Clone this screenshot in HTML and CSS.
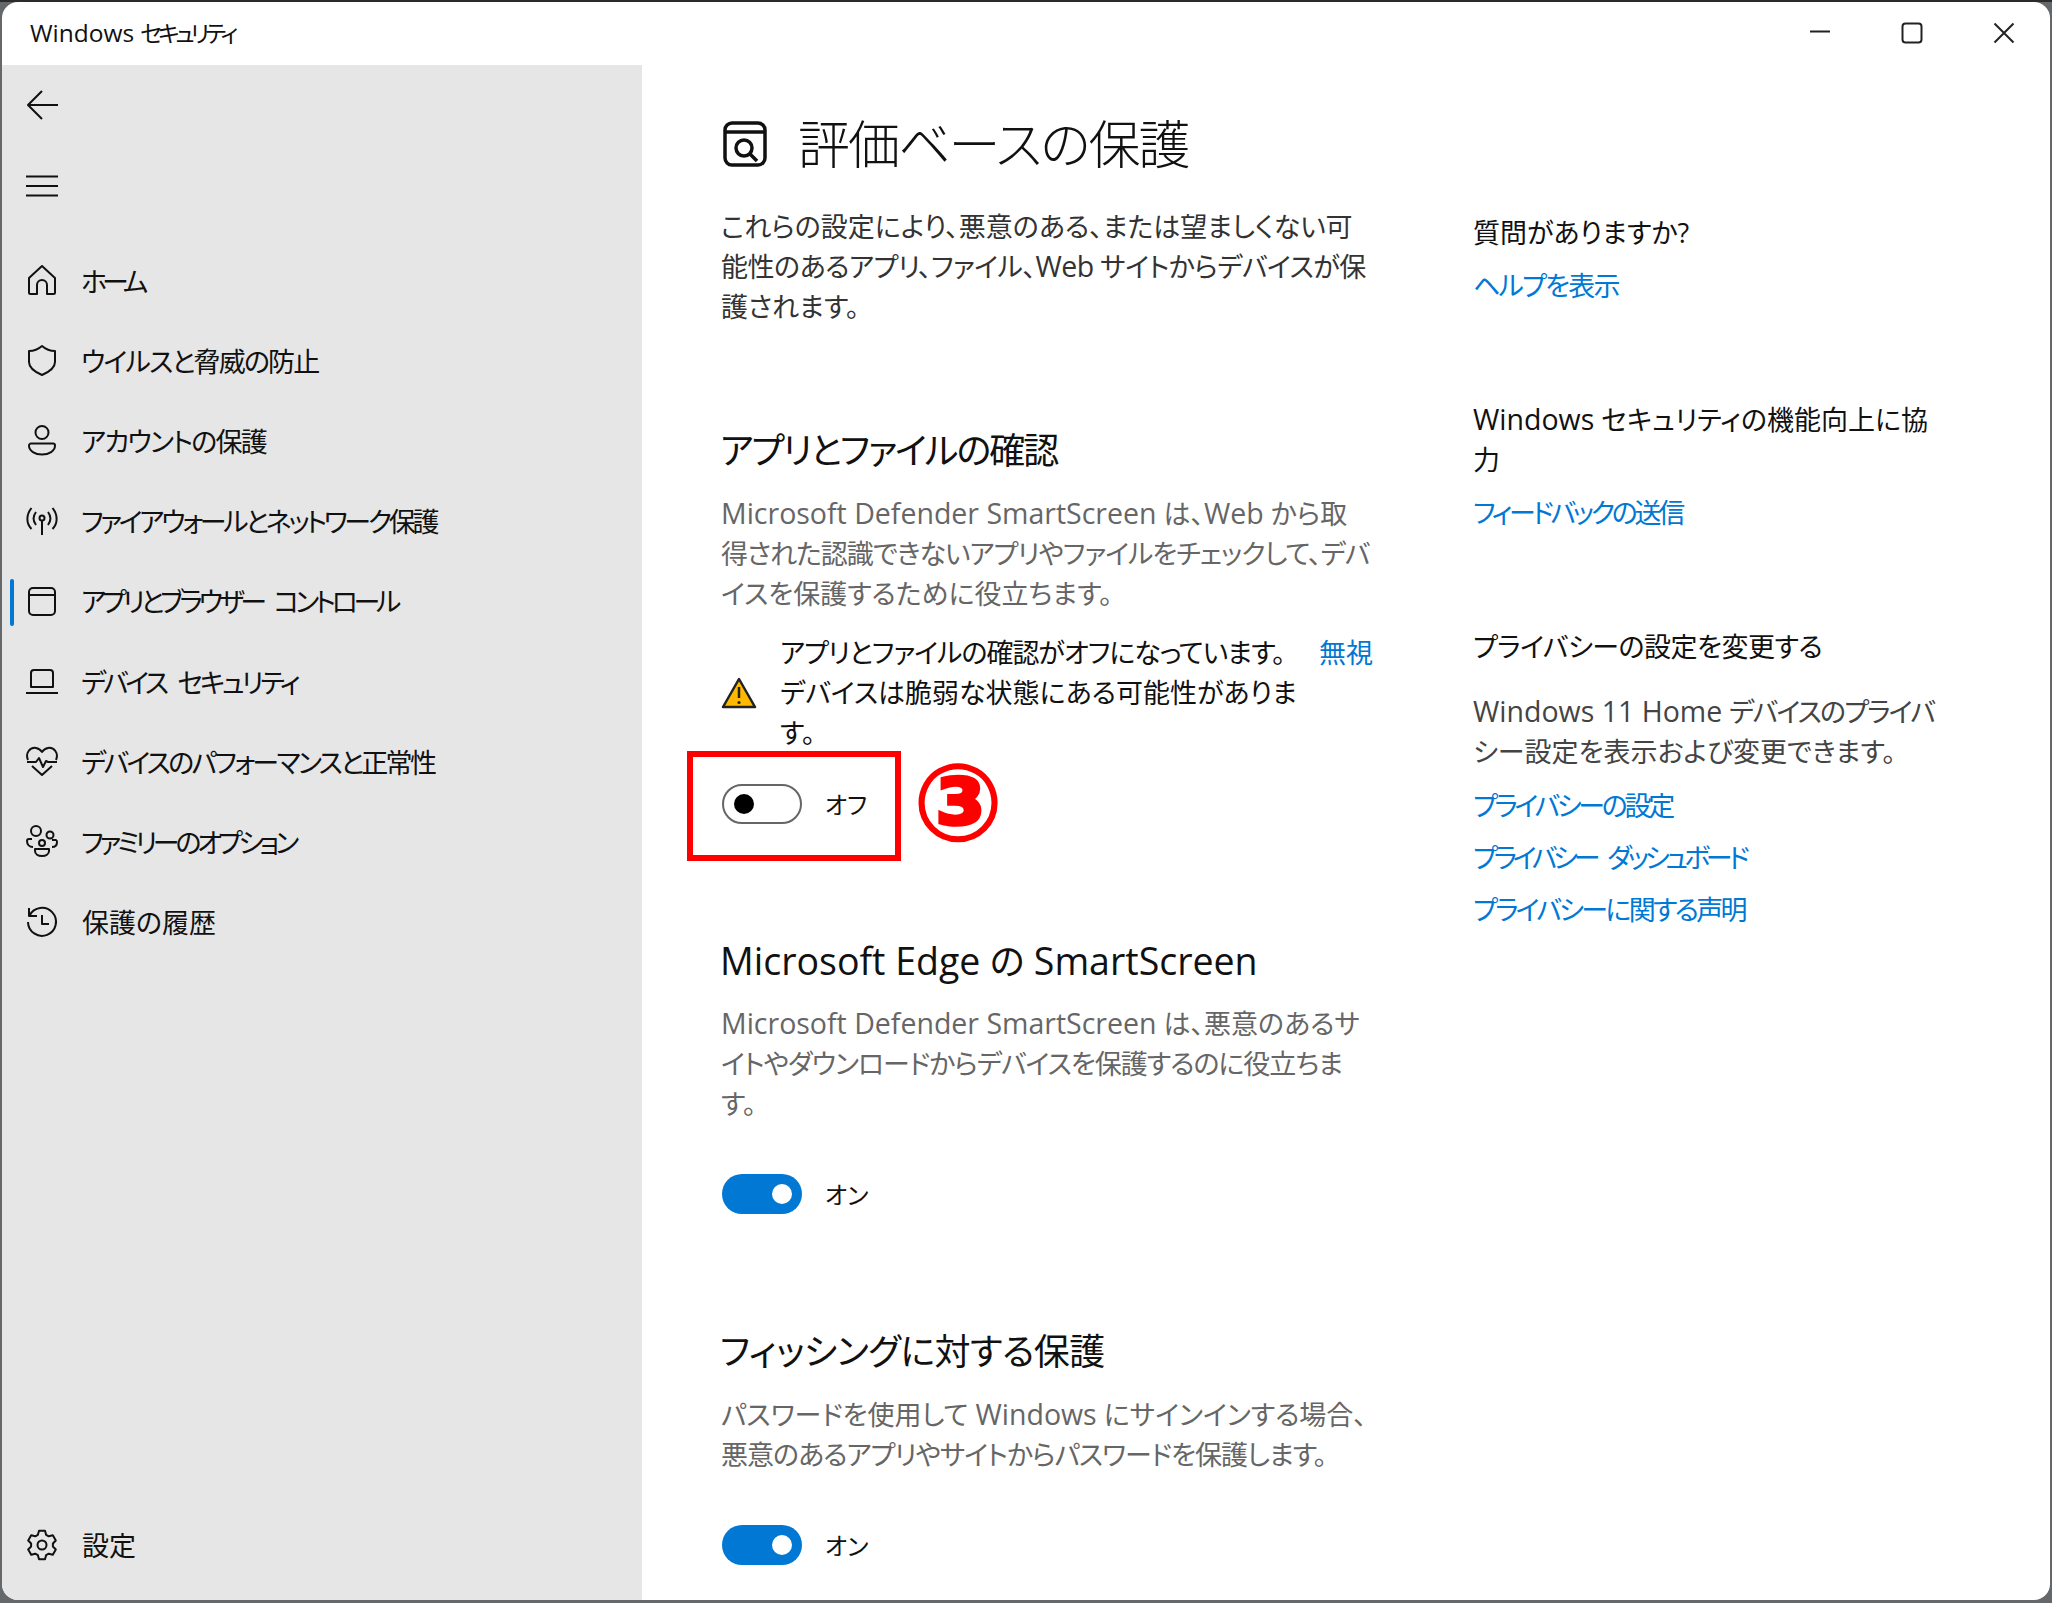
FILE: index.html
```html
<!DOCTYPE html>
<html lang="ja">
<head>
<meta charset="utf-8">
<title>Windows セキュリティ</title>
<link rel="stylesheet" href="styles.css">
</head>
<body>
<div class="window">
  <header class="titlebar">
    <span class="app-name"><span class="lat-t">Windows</span> <span class="ls4">セキュリティ</span></span>
    <div class="caption">
      <svg class="cap" viewBox="0 0 22 22"><path d="M1 9.500H21"/></svg>
      <svg class="cap" viewBox="0 0 22 22"><rect x="1.500" y="1.500" width="19" height="19" rx="3"/></svg>
      <svg class="cap" viewBox="0 0 22 22"><path d="M1.500 1.500L20.500 20.500M20.500 1.500L1.500 20.500"/></svg>
    </div>
  </header>
  <div class="content">
    <aside class="sidebar">
      <div class="tool"><svg class="ico" viewBox="0 0 32 32"><path d="M16 2L2 16L16 30M2 16H32"/></svg></div>
      <div class="tool"><svg class="ico" viewBox="0 0 32 32"><path d="M0 6.500H32M0 16H32M0 25.500H32"/></svg></div>
      <nav class="nav">
        <div class="item"><svg class="ico" viewBox="0 0 32 32"><path d="M3 14L16 2L29 14V28.500a1.500 1.500 0 0 1-1.500 1.500H21V21a5 5 0 0 0-10 0V30H4.500A1.500 1.500 0 0 1 3 28.500Z"/></svg><span class="ls5">ホーム</span></div>
        <div class="item"><svg class="ico" viewBox="0 0 32 32"><path d="M16 2C20 5.500 24 7 29 7V18C29 24 23 28 16 31C9 28 3 24 3 18V7C8 7 12 5.500 16 2Z"/></svg><span class="ls2">ウイルスと脅威の防止</span></div>
        <div class="item"><svg class="ico" viewBox="0 0 32 32"><circle cx="16" cy="8.500" r="6.500"/><path d="M5 19.500H27a2 2 0 0 1 2 2C29 27 23 30.500 16 30.500S3 27 3 21.500a2 2 0 0 1 2-2Z"/></svg><span class="ls2">アカウントの保護</span></div>
        <div class="item"><svg class="ico" viewBox="0 0 32 32"><circle cx="16" cy="13" r="2.500"/><path d="M16 15.500V30M10 7C7 11 7 16 10 20M22 7C25 11 25 16 22 20M5.500 3C0 10 0 18 5.500 24M26.500 3C32 10 32 18 26.500 24"/></svg><span class="ls3">ファイアウォールとネットワーク保護</span></div>
        <div class="item active"><svg class="ico" viewBox="0 0 32 32"><rect x="3" y="3" width="26" height="27" rx="4"/><path d="M3 10H29"/></svg><span class="ls4">アプリとブラウザー コントロール</span></div>
        <div class="item"><svg class="ico" viewBox="0 0 32 32"><path d="M5 22V8a3 3 0 0 1 3-3H24a3 3 0 0 1 3 3V22ZM0 28H32"/></svg><span class="ls3">デバイス セキュリティ</span></div>
        <div class="item"><svg class="ico" viewBox="0 0 32 32"><path d="M2 15C-1 8 4 2 10 3C13 3.500 15 5.500 16 7C17 5.500 19 3.500 22 3C28 2 33 8 30 15M1 17H10L13 13L17 22L20 16L22 17H31M6 21L16 30L26 21"/></svg><span class="ls25">デバイスのパフォーマンスと正常性</span></div>
        <div class="item"><svg class="ico" viewBox="0 0 32 32"><circle cx="10" cy="6" r="5"/><circle cx="24" cy="10" r="3.500"/><circle cx="16" cy="18" r="3"/><path d="M6 14H3a2 2 0 0 0-2 2C1 19 3 22 7 22M26 15H30a2 2 0 0 1 1 2C31 20 29 22 26 22M9 24H23V26C23 29 20 31 16 31S9 29 9 26Z"/></svg><span class="ls4">ファミリーのオプション</span></div>
        <div class="item"><svg class="ico" viewBox="0 0 32 32"><path d="M3 2V10H11M3.500 9.500A14 14 0 1 1 2 16M16 9V18H23"/></svg><span class="k">保護の履歴</span></div>
      </nav>
      <div class="item settings"><svg class="ico" viewBox="0 0 32 32"><path d="M13 1.800L19 1.800L20.100 5.800L22.800 7.300L26.800 6.300L29.800 11.500L26.900 14.500L26.900 17.500L29.800 20.500L26.800 25.700L22.800 24.700L20.100 26.200L19 30.200L13 30.200L11.900 26.200L9.200 24.700L5.200 25.700L2.200 20.500L5.100 17.500L5.100 14.500L2.200 11.500L5.200 6.300L9.200 7.300L11.900 5.800Z"/><circle cx="16" cy="16" r="4.500"/></svg><span class="k">設定</span></div>
    </aside>
    <main class="main">
      <div class="left">
        <div class="page-head">
          <svg class="page-ico" viewBox="0 0 44 46"><rect x="2" y="2" width="40" height="42" rx="7"/><path d="M2 11H42"/><circle cx="21" cy="27" r="8"/><path d="M27 33L34 40"/></svg>
          <h1>評価ベースの保護</h1>
        </div>
        <p class="intro">これらの設定により、悪意のある、または望ましくない可<br><span class="ls05">能性のあるアプリ、ファイル、<span class="lat">Web</span> サイトからデバイスが保</span><br>護されます。</p>

        <h2 class="h-first tight">アプリとファイルの確認</h2>
        <p class="desc"><span class="lat">Microsoft Defender SmartScreen</span> は、<span class="lat">Web</span> から取<br><span class="ls1">得された認識できないアプリやファイルをチェックして、デバ</span><br>イスを保護するために役立ちます。</p>
        <div class="warning">
          <svg class="warn-ico" viewBox="0 0 36 32"><path d="M18 2L34 30H2Z" fill="#ffb900" stroke="#222" stroke-width="2.500" stroke-linejoin="round"/><path d="M18 10V21" stroke="#222" stroke-width="2.500"/><circle cx="18" cy="25.500" r="1.600" fill="#222"/></svg>
          <p class="warn-text"><span class="ls1">アプリとファイルの確認がオフになっています。</span><br>デバイスは脆弱な状態にある可能性がありま<br>す。</p>
          <a class="link warn-link">無視</a>
        </div>
        <div class="toggle-row tr-first">
          <span class="toggle off"><i class="knob"></i></span><span class="tlabel">オフ</span>
          <div class="red-box"></div>
          <div class="callout">③</div>
        </div>

        <h2 class="h-next"><span class="lat-h">Microsoft Edge</span> の <span class="lat-h">SmartScreen</span></h2>
        <p class="desc desc-tight"><span class="lat">Microsoft Defender SmartScreen</span> は、悪意のあるサ<br><span class="ls1">イトやダウンロードからデバイスを保護するのに役立ちま</span><br>す。</p>
        <div class="toggle-row">
          <span class="toggle on"><i class="knob"></i></span><span class="tlabel">オン</span>
        </div>

        <h2 class="h-next ls05">フィッシングに対する保護</h2>
        <p class="desc">パスワードを使用して <span class="lat">Windows</span> にサインインする場合、<br><span class="ls1">悪意のあるアプリやサイトからパスワードを保護します。</span></p>
        <div class="toggle-row">
          <span class="toggle on"><i class="knob"></i></span><span class="tlabel">オン</span>
        </div>
      </div>
      <div class="right">
        <section class="block">
          <h3>質問がありますか?</h3>
          <a class="link ls2">ヘルプを表示</a>
        </section>
        <section class="block">
          <h3><span class="lat">Windows</span> セキュリティの機能向上に協<br>力</h3>
          <a class="link ls3">フィードバックの送信</a>
        </section>
        <section class="block">
          <h3 class="ls05">プライバシーの設定を変更する</h3>
          <p class="privacy"><span class="lat">Windows 11 Home</span> <span class="ls2">デバイスのプライバ</span><br>シー設定を表示および変更できます。</p>
          <a class="link ls3">プライバシーの設定</a>
          <a class="link ls4">プライバシー ダッシュボード</a>
          <a class="link ls25">プライバシーに関する声明</a>
        </section>
      </div>
    </main>
  </div>
</div>
</body>
</html>
```
FILE: styles.css
```css
* { box-sizing: border-box; }
html, body { margin: 0; height: 100%; }
body {
  background: #65686b;
  border-top: 2px solid #2b2b2b;
  padding: 0 2px 3px 2px;
  overflow: hidden;
  font-family: "Open Sans", "Noto Sans CJK JP", sans-serif;
  font-feature-settings: "palt";
  font-size: 27px;
  line-height: 40px;
  color: #111;
}
.lat { font-size: 28.500px; line-height: 0; }
.lat-t { font-size: 24.500px; line-height: 0; }
.lat-h { font-size: 37.500px; line-height: 0; }
.ls05 { letter-spacing: -0.500px; }
.ls1 { letter-spacing: -1px; }
.ls2 { letter-spacing: -1.800px; }
.ls25 { letter-spacing: -2.700px; }
.ls3 { letter-spacing: -3.300px; word-spacing: 8px; }
.ls4 { letter-spacing: -4.200px; word-spacing: 8px; }
.ls5 { letter-spacing: -5px; }

.window {
  height: 1598px;
  background: #fff;
  border-radius: 16px;
  overflow: hidden;
  display: flex;
  flex-direction: column;
}
.titlebar {
  height: 63px;
  flex: none;
  display: flex;
  align-items: center;
  justify-content: space-between;
  padding: 0 35px 0 28px;
}
.app-name { font-size: 23px; margin-top: -2px; }
.caption { display: flex; gap: 70px; align-items: center; margin-top: -2px; }
.cap { width: 22px; height: 22px; fill: none; stroke: #222; stroke-width: 2; }
.content { flex: 1; display: flex; min-height: 0; }

.sidebar {
  width: 640px;
  flex: none;
  background: #e6e6e6;
  display: flex;
  flex-direction: column;
  padding-bottom: 15px;
}
.tool { height: 81px; display: flex; align-items: center; padding-left: 24px; }
.tool:first-child { height: 80px; }
.nav { display: flex; flex-direction: column; margin-top: 14px; flex: 1; }
.item {
  position: relative;
  height: 80.200px;
  display: flex;
  align-items: center;
  gap: 23px;
  padding-left: 24px;
  flex: none;
}
.item span { white-space: nowrap; margin-top: 3px; }
.item .k { margin-left: 1px; }
.ico { width: 32px; height: 32px; flex: none; fill: none; stroke: #111; stroke-width: 2; overflow: visible; stroke-linejoin: round; }
.active::before {
  content: "";
  position: absolute;
  left: 8px;
  top: 18px;
  width: 4px;
  height: 47px;
  border-radius: 2px;
  background: #0078d4;
}

.main { flex: 1; display: flex; min-width: 0; padding-left: 79px; }
.left { width: 752px; flex: none; padding-top: 49px; }
.right { flex: 1; padding-top: 148px; }

.page-head { display: flex; align-items: center; gap: 31px; height: 60px; }
.page-ico { width: 44px; height: 46px; flex: none; fill: none; stroke: #111; stroke-width: 3.500; margin-left: 2px; margin-top: -1px; }
h1 { margin: 0; font-size: 52px; line-height: 60px; font-weight: 300; white-space: nowrap; letter-spacing: -2px; }
h2 { margin: 0 0 0 -1px; font-size: 36px; line-height: 48px; font-weight: 400; color: #111; white-space: nowrap; }
h2.tight { letter-spacing: -2px; }
p { margin: 0; white-space: nowrap; }
.intro { margin-top: 33px; color: #333; }
.h-first { margin-top: 100px; }
.h-next { margin-top: 114px; }
.desc { margin-top: 19px; color: #666; }
.desc-tight { margin-top: 18px; }

.warning { margin-top: 19px; display: flex; align-items: center; position: relative; }
.warn-ico { width: 36px; height: 32px; flex: none; margin-right: 23px; }
.warn-text { color: #111; }
.warn-link { position: absolute; left: 598px; top: 0; }

.toggle-row { margin-top: 50px; height: 40px; display: flex; align-items: center; position: relative; padding-left: 1px; }
.tr-first { margin-top: 31px; }
.toggle { width: 80px; height: 40px; border-radius: 20px; display: flex; align-items: center; padding: 0 10px; flex: none; }
.off { border: 2px solid #666; background: #fff; }
.on { background: #0078d4; justify-content: flex-end; }
.knob { width: 20px; height: 20px; border-radius: 50%; display: block; }
.off .knob { background: #000; }
.on .knob { background: #fff; }
.tlabel { margin: 2px 0 0 23px; font-size: 24px; }
.red-box {
  position: absolute;
  left: -34px;
  top: -33px;
  width: 214px;
  height: 110px;
  border: 6px solid #f00;
}
.callout {
  position: absolute;
  left: 195px;
  top: -26px;
  width: 84px;
  height: 92px;
  display: flex;
  align-items: center;
  justify-content: center;
  font-family: "DejaVu Sans", "Noto Sans CJK JP", sans-serif;
  font-feature-settings: normal;
  font-size: 106px;
  line-height: 92px;
  font-weight: 700;
  color: #f00;
  -webkit-text-stroke: 2px #f00;
}

h3 { margin: 0; font-size: 27px; line-height: 40px; font-weight: 400; white-space: nowrap; }
.block { display: flex; flex-direction: column; margin-bottom: 94px; align-items: flex-start; }
.link { color: #0078d4; display: block; line-height: 40px; margin-top: 12px; white-space: nowrap; }
h3 + .link { margin-top: 13px; }
.privacy + .link { margin-top: 14px; }
.warn-link { margin-top: 0; }
.privacy { margin-top: 25px; color: #444; }
```
